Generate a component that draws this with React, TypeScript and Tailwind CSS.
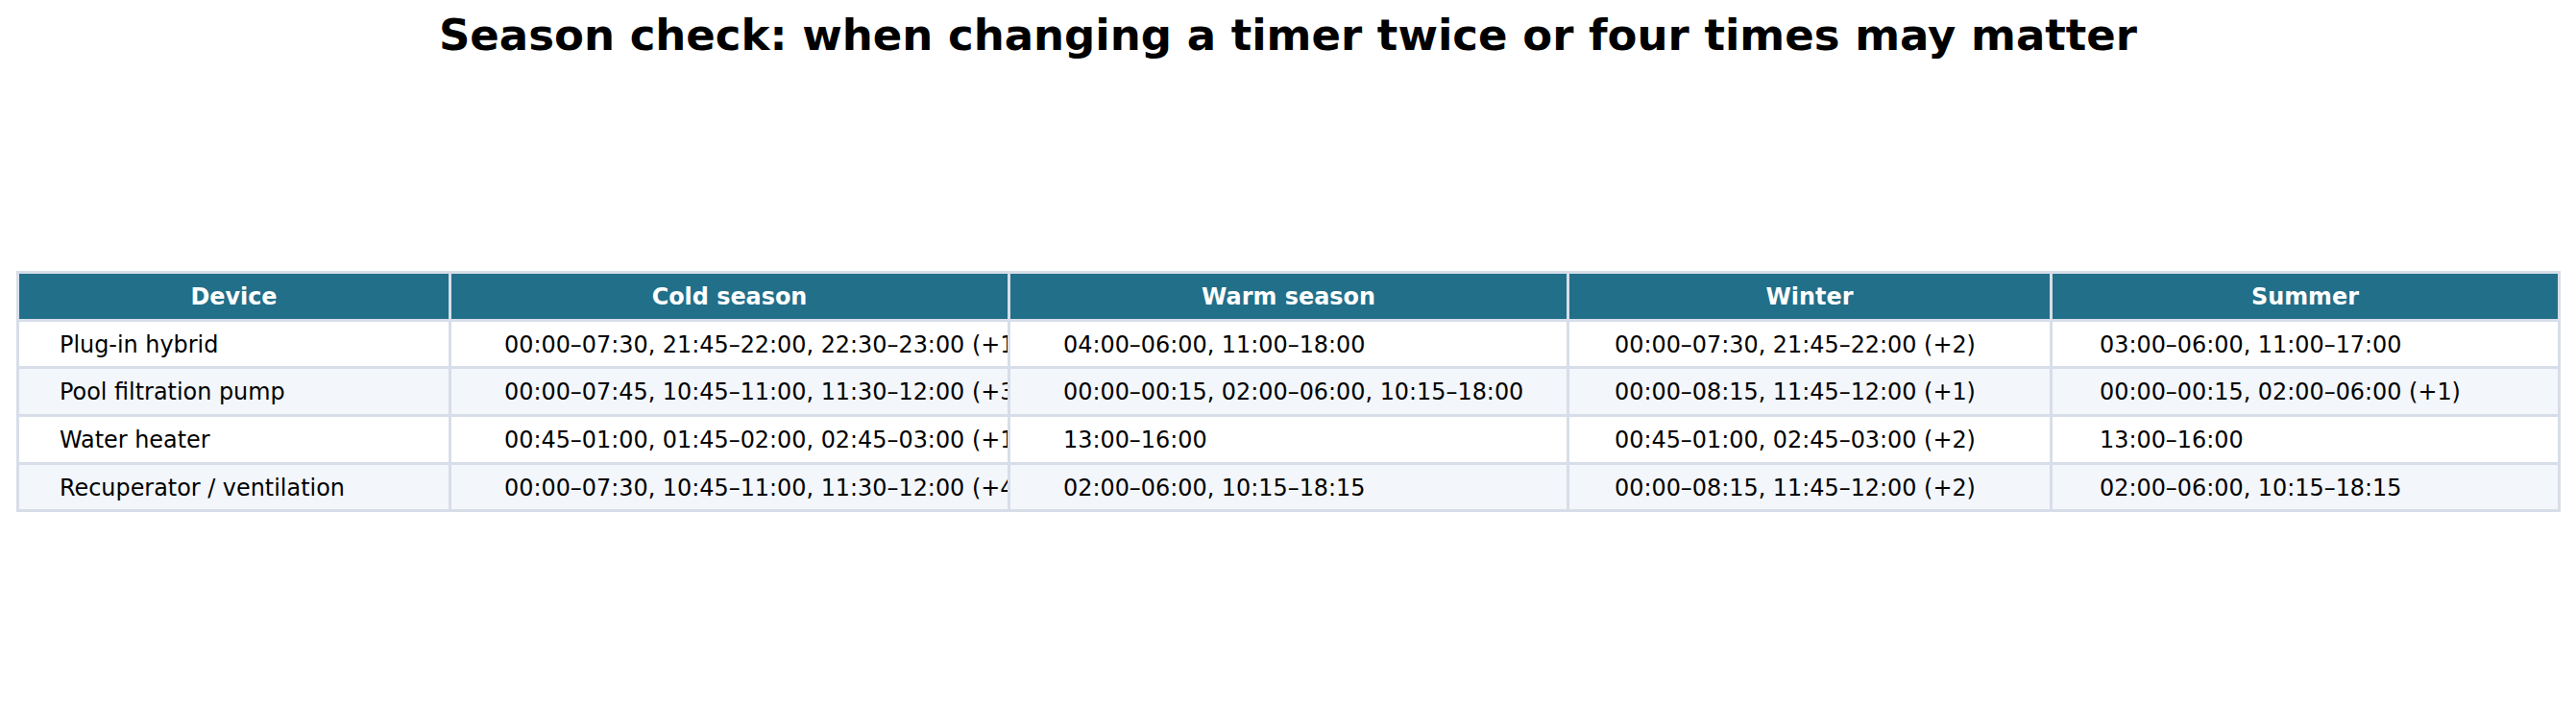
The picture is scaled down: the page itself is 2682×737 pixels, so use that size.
const columns = ['Device', 'Cold season', 'Warm season', 'Winter', 'Summer'];

// left padding per column so the text lands where the reference puts it
const padding = ['pl-[42px]', 'pl-[55px]', 'pl-[55px]', 'pl-[47px]', 'pl-[49px]'];

const rows: string[][] = [
  [
    'Plug-in hybrid',
    '00:00–07:30, 21:45–22:00, 22:30–23:00 (+1)',
    '04:00–06:00, 11:00–18:00',
    '00:00–07:30, 21:45–22:00 (+2)',
    '03:00–06:00, 11:00–17:00',
  ],
  [
    'Pool filtration pump',
    '00:00–07:45, 10:45–11:00, 11:30–12:00 (+3)',
    '00:00–00:15, 02:00–06:00, 10:15–18:00',
    '00:00–08:15, 11:45–12:00 (+1)',
    '00:00–00:15, 02:00–06:00 (+1)',
  ],
  [
    'Water heater',
    '00:45–01:00, 01:45–02:00, 02:45–03:00 (+1)',
    '13:00–16:00',
    '00:45–01:00, 02:45–03:00 (+2)',
    '13:00–16:00',
  ],
  [
    'Recuperator / ventilation',
    '00:00–07:30, 10:45–11:00, 11:30–12:00 (+4)',
    '02:00–06:00, 10:15–18:15',
    '00:00–08:15, 11:45–12:00 (+2)',
    '02:00–06:00, 10:15–18:15',
  ],
];

export default function App() {
  return (
    <div className="flex h-[737px] w-[2682px] flex-col bg-white font-['DejaVu_Sans',sans-serif] text-black">
      <h1 className="mt-[11px] h-[52px] text-center text-[45px] leading-[52px] font-bold">
        Season check: when changing a timer twice or four times may matter
      </h1>

      {/* cells that run long are cut at the next column, as in the reference */}
      <div className="mt-[219px] ml-[17px] grid w-[2649px] auto-rows-[46.66px] grid-cols-[447px_579px_579px_500px_526px] gap-[3px] bg-[#d7dee9] p-[3px] text-[23.9px]">
        {columns.map((col) => (
          <div
            key={col}
            className="flex items-center justify-center overflow-hidden bg-[#226f89] pt-[3px] font-bold whitespace-nowrap text-white"
          >
            {col}
          </div>
        ))}

        {rows.map((row, r) =>
          row.map((cell, c) => (
            <div
              key={`${r}-${c}`}
              className={`flex items-center overflow-hidden pt-[3px] whitespace-nowrap ${padding[c]} ${
                r % 2 === 1 ? 'bg-[#f3f6fa]' : 'bg-white'
              }`}
            >
              {cell}
            </div>
          ))
        )}
      </div>
    </div>
  );
}
